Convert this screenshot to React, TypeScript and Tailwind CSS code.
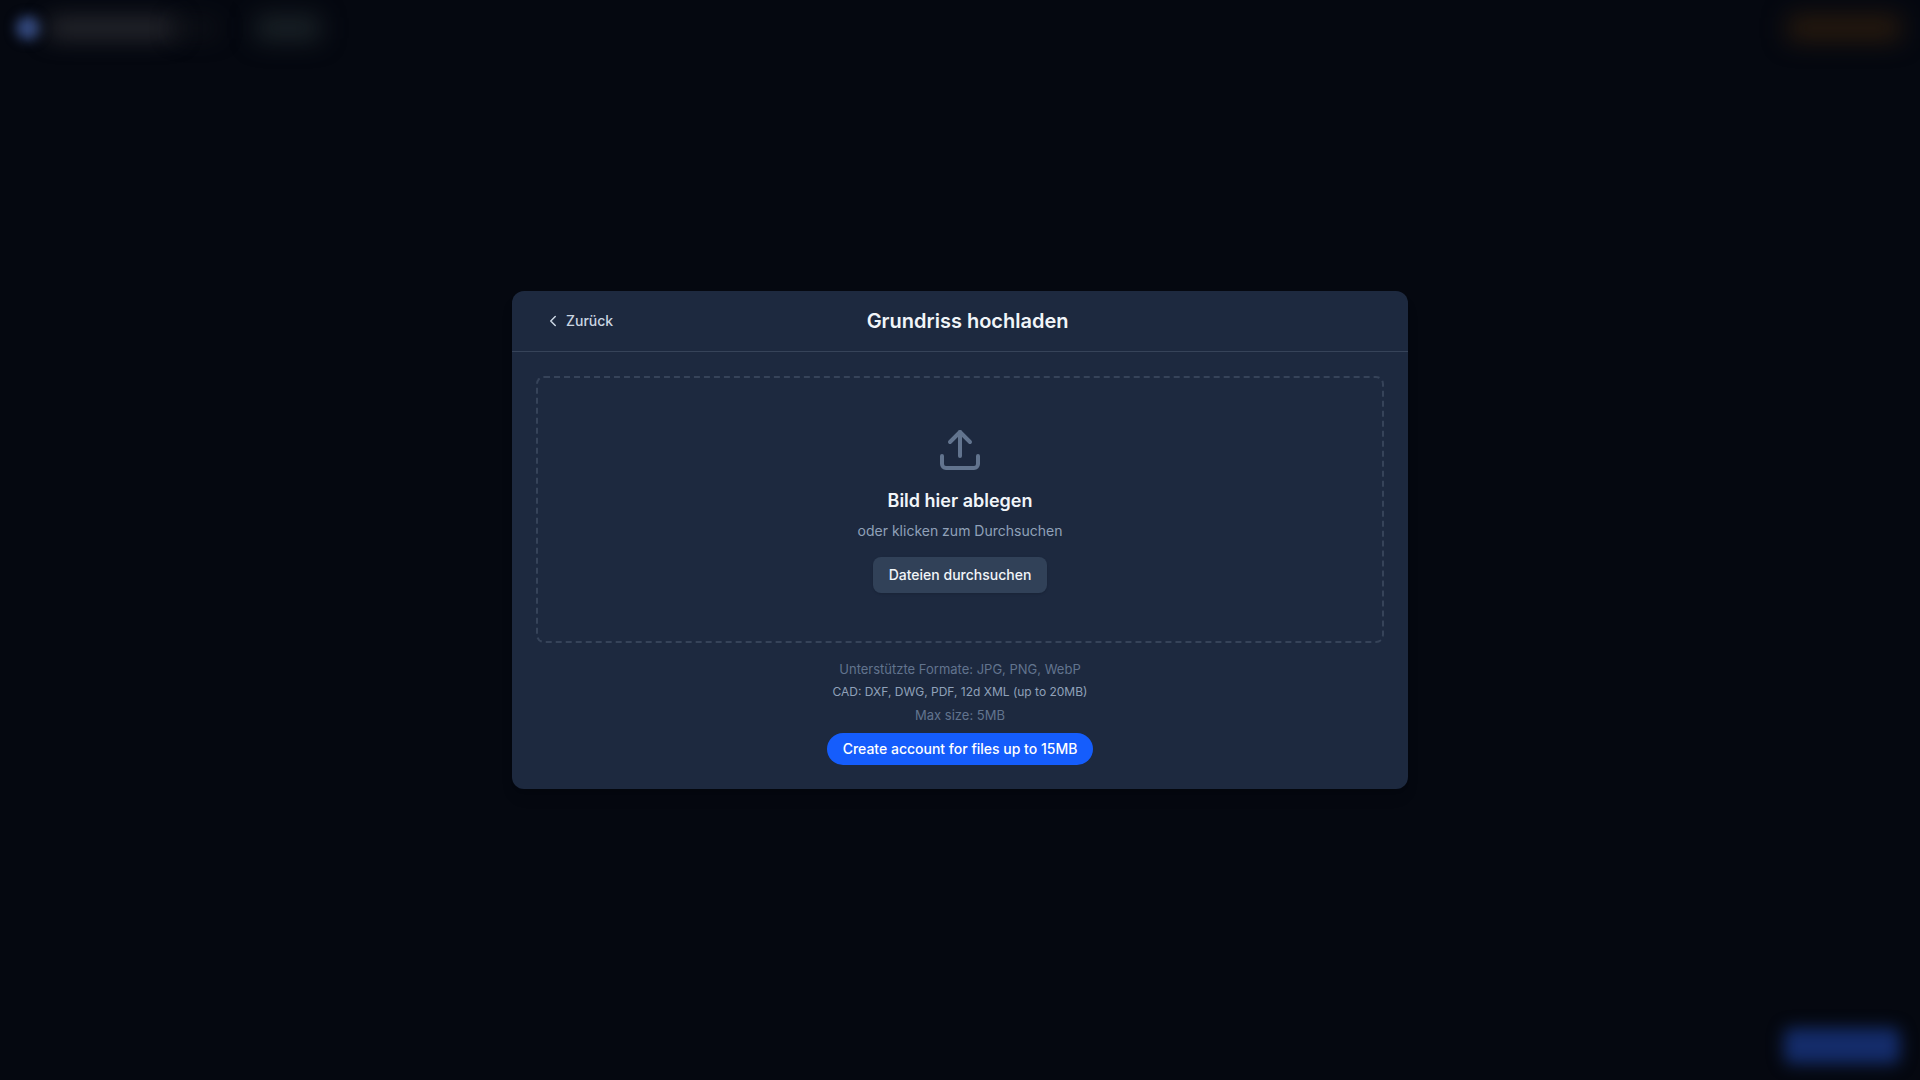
import { ChevronLeft, Upload } from "lucide-react";

function Backdrop() {
  return (
    <div aria-hidden="true" className="absolute inset-0 flex flex-col justify-between overflow-hidden">
      <div className="flex h-14 items-center justify-between px-4">
        <div className="flex items-center">
          <div className="size-6 rounded-full bg-[#33487c] blur-[6px]" />
          <div className="ml-2 h-4 w-32 rounded bg-[#333338] blur-md" />
          <div className="h-3 w-10 rounded bg-[#14161b] blur-md" />
          <div className="ml-10 h-6 w-16 rounded bg-[#1b2328] blur-md" />
        </div>
        <div className="mr-1 h-6 w-28 rounded bg-[#2a1b0d] blur-md" />
      </div>
      <div className="flex justify-end p-4">
        <div className="mr-1 h-9 w-29 rounded-lg bg-[#142c6a] blur-[8px]" />
      </div>
    </div>
  );
}

export default function App() {
  return (
    <div className="relative flex min-h-screen items-center justify-center bg-[#050810] p-4 font-['Inter',sans-serif]">
      <Backdrop />
      <div
        role="dialog"
        aria-modal="true"
        aria-labelledby="upload-title"
        className="relative w-full max-w-4xl overflow-hidden rounded-xl bg-[#1d293f] shadow-lg"
      >
        <header className="flex items-center justify-between border-b border-[#364359] px-6 py-3">
          <button
            type="button"
            className="flex h-9 items-center gap-1 rounded-md px-2 text-sm font-medium text-[#cad5e2]"
          >
            <ChevronLeft className="size-[18px]" />
            Zurück
          </button>
          <h2 id="upload-title" className="text-xl font-semibold text-slate-100">
            Grundriss hochladen
          </h2>
          <div className="w-[70px]" />
        </header>

        <div className="p-6">
          <div className="flex flex-col items-center rounded-lg border-2 border-dashed border-[#364359] p-12 text-center">
            <Upload className="mb-[13px] size-12 text-[#62748e]" />
            <h3 className="mb-1.5 text-lg font-semibold text-slate-100">Bild hier ablegen</h3>
            <p className="mb-4 text-sm text-[#90a1b9]">oder klicken zum Durchsuchen</p>
            <button
              type="button"
              className="h-9 rounded-lg bg-[#314158] px-4 text-sm font-medium text-slate-100 shadow-sm"
            >
              Dateien durchsuchen
            </button>
          </div>

          <div className="mt-4 flex flex-col items-center text-center text-[13px] leading-5 text-[#62748e]">
            <p>Unterstützte Formate: JPG, PNG, WebP</p>
            <p className="mt-1 text-xs leading-[18px] text-[#90a1b9]">CAD: DXF, DWG, PDF, 12d XML (up to 20MB)</p>
            <p className="mt-1">Max size: 5MB</p>
            <button
              type="button"
              className="mt-2 h-8 rounded-full bg-[#155dfc] px-4 text-sm font-medium text-white"
            >
              Create account for files up to 15MB
            </button>
          </div>
        </div>
      </div>
    </div>
  );
}
